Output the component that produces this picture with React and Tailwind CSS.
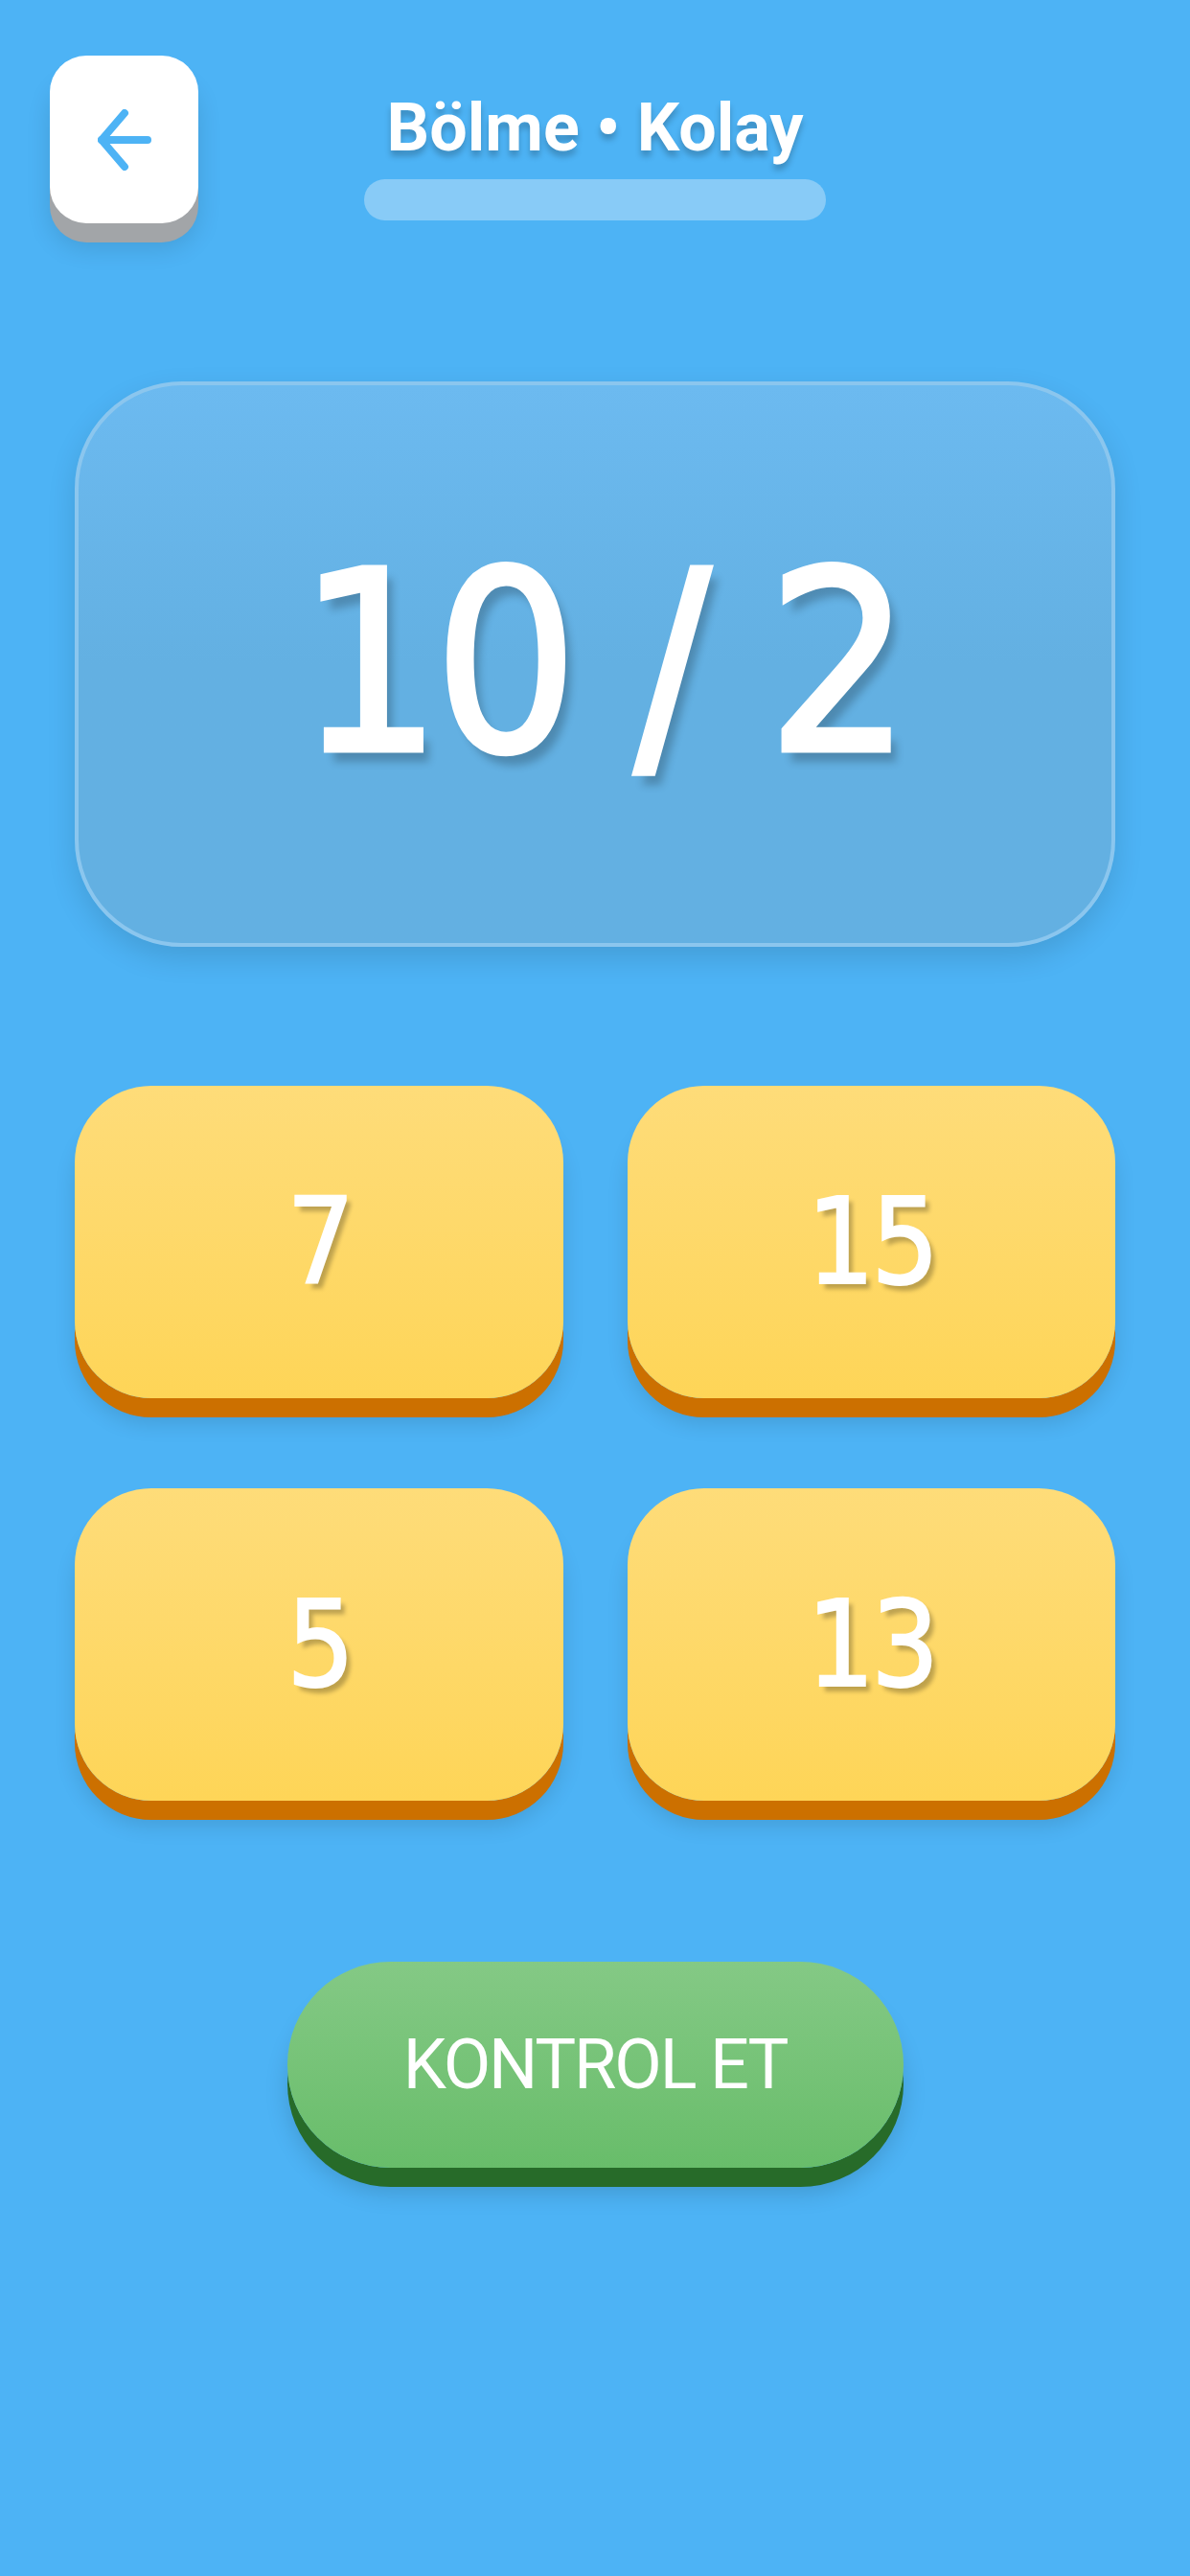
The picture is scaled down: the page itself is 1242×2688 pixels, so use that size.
import React from "react";

const answers = [7, 15, 5, 13];

const digitFont = "font-['DejaVu_Sans_Condensed','DejaVu_Sans',sans-serif]";

function BackArrow() {
  return (
    <svg width="56" height="64" viewBox="0 0 56 64" fill="none" stroke="#4db3f5" strokeWidth="8" strokeLinecap="round" strokeLinejoin="round">
      <path d="M28 4 L4 32 L28 60" />
      <path d="M4 32 H52" />
    </svg>
  );
}

export default function App() {
  return (
    <div className="min-h-[2688px] w-full bg-[#4db3f5] font-['Roboto',sans-serif]">
      {/* Header */}
      <header className="grid grid-cols-[1fr_482px_1fr] pt-[58px]">
        <div className="pl-[52px]">
          <button className="flex h-[175px] w-[155px] items-center justify-center rounded-[38px] bg-white shadow-[0_20px_0_#a2a5a8,0_26px_26px_rgba(0,0,0,0.12)]">
            <BackArrow />
          </button>
        </div>
        <div className="flex flex-col items-center pt-[33px]">
          <h1 className="whitespace-nowrap text-[70px] font-bold leading-[84px] text-white [text-shadow:0_6px_6px_rgba(0,0,0,0.22)]">
            Bölme • Kolay
          </h1>
          <div className="mt-[12px] h-[43px] w-full rounded-full bg-[#88cbf7]" />
        </div>
        <div />
      </header>

      <main className="px-[78px]">
        {/* Problem card */}
        <section className="mt-[165px] flex h-[590px] items-center justify-center rounded-[112px] border-4 border-[#8bc6ee] bg-gradient-to-b from-[#6cbaf0] via-[#63b0e2] to-[#63b0e2] shadow-[0_12px_30px_rgba(0,0,0,0.12)]">
          <span className={`${digitFont} pl-[12px] text-[262px] leading-none tracking-[-0.03em] text-white [-webkit-text-stroke:5px_white] [text-shadow:8px_12px_8px_rgba(0,0,0,0.22)]`}>
            10 / 2
          </span>
        </section>

        {/* Answers */}
        <div className="mt-[145px] grid grid-cols-2 gap-x-[67px] gap-y-[94px]">
          {answers.map((a) => (
            <button
              key={a}
              className="flex h-[326px] items-center justify-center rounded-[80px] bg-gradient-to-b from-[#fedc79] to-[#fed557] shadow-[0_20px_0_#cc7000,0_26px_22px_rgba(0,0,0,0.12)]"
            >
              <span className={`${digitFont} text-[124px] leading-none tracking-[-0.03em] text-white [-webkit-text-stroke:2px_white] [text-shadow:5px_6px_4px_rgba(0,0,0,0.25)]`}>
                {a}
              </span>
            </button>
          ))}
        </div>

        {/* Check button */}
        <div className="mt-[168px] flex justify-center">
          <button className="flex h-[215px] w-[643px] items-center justify-center rounded-full bg-gradient-to-b from-[#84c985] to-[#68bd6a] shadow-[0_20px_0_#276b29,0_26px_24px_rgba(0,0,0,0.15)]">
            <span className="text-[72px] font-normal leading-none tracking-[-0.03em] text-white">
              KONTROL ET
            </span>
          </button>
        </div>
      </main>
    </div>
  );
}
